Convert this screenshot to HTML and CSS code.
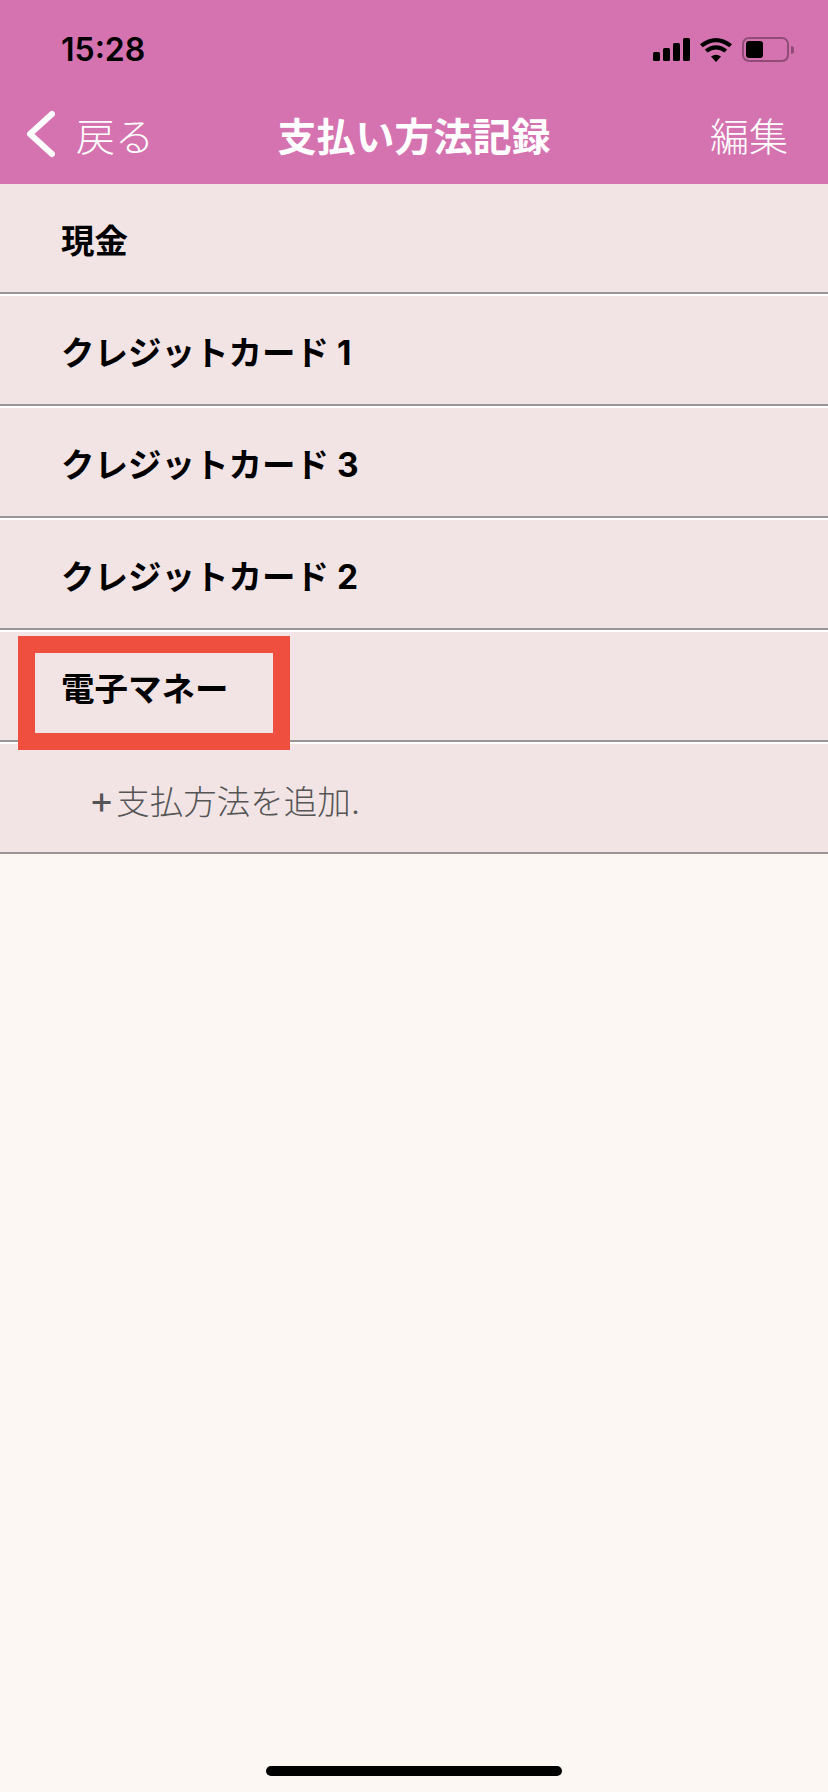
FILE: index.html
```html
<!DOCTYPE html>
<html lang="ja">
<head>
    <meta charset="UTF-8">
    <meta name="viewport" content="width=device-width, initial-scale=1.0">
    <title>支払い方法記録</title>
    <link rel="stylesheet" href="styles.css">
</head>
<body>
    <header class="top-bar">
        <div class="status-bar">
            <span class="clock">15:28</span>
            <div class="status-icons">
                <svg class="signal" width="37" height="23" viewBox="0 0 37 23">
                    <rect x="0" y="14" width="7" height="9" rx="1.5"/>
                    <rect x="10" y="10" width="7" height="13" rx="1.5"/>
                    <rect x="20" y="5" width="7" height="18" rx="1.5"/>
                    <rect x="30" y="0" width="7" height="23" rx="1.5"/>
                </svg>
                <svg class="wifi" width="32" height="24" viewBox="0 0 32 24">
                    <path d="M16 24 L11 18.5 Q16 15 21 18.5 Z"/>
                    <path d="M7.5 14.5 L4.8 11.5 Q16 3 27.2 11.5 L24.5 14.5 Q16 8.5 7.5 14.5 Z"/>
                    <path d="M2.7 9.3 L0 6.2 Q16 -6 32 6.2 L29.3 9.3 Q16 -1 2.7 9.3 Z"/>
                </svg>
                <div class="battery">
                    <div class="battery-body"><div class="battery-level"></div></div>
                    <div class="battery-tip"></div>
                </div>
            </div>
        </div>
        <nav class="nav-bar">
            <a class="nav-back">
                <svg width="30" height="48" viewBox="0 0 30 48">
                    <path d="M27 4 L5 24 L27 44" fill="none" stroke="#fff" stroke-width="6" stroke-linecap="round" stroke-linejoin="round"/>
                </svg>
                <span>戻る</span>
            </a>
            <h1 class="nav-title">支払い方法記録</h1>
            <a class="nav-edit">編集</a>
        </nav>
    </header>

    <ul class="method-list">
        <li class="method-row">現金</li>
        <li class="method-row">クレジットカード 1</li>
        <li class="method-row">クレジットカード 3</li>
        <li class="method-row">クレジットカード 2</li>
        <li class="method-row">
            電子マネー
            <div class="highlight-box"></div>
        </li>
        <li class="method-row add-row"><span class="plus">+</span>支払方法を追加.</li>
    </ul>

    <div class="home-bar"></div>
</body>
</html>
```

FILE: styles.css
```css
* {
    box-sizing: border-box;
}

body {
    font-family: Inter, "Noto Sans CJK JP", sans-serif;
    background-color: #fcf7f2;
    width: 828px;
    height: 1792px;
    margin: 0;
    position: relative;
    overflow: hidden;
}

.top-bar {
    background-color: #d573b1;
    height: 184px;
}

.status-bar {
    height: 92px;
    display: flex;
    justify-content: space-between;
    align-items: center;
    padding: 7px 34px 0 61px;
}

.clock {
    font-size: 32px;
    font-weight: 600;
    color: #000;
}

.status-icons {
    display: flex;
    align-items: center;
    gap: 10px;
}

.battery {
    display: flex;
    align-items: center;
    gap: 2px;
}

.battery-body {
    width: 47px;
    height: 25px;
    border: 2px solid #8f4c76;
    border-radius: 7px;
    padding: 2px;
}

.battery-level {
    width: 17px;
    height: 17px;
    background-color: #000;
    border-radius: 3px;
}

.battery-tip {
    width: 3px;
    height: 8px;
    background-color: #8f4c76;
    border-radius: 0 4px 4px 0;
}

.nav-bar {
    height: 92px;
    display: flex;
    align-items: center;
    justify-content: space-between;
    padding: 0 40px 8px 25px;
    position: relative;
    color: #fff;
}

.nav-back {
    display: flex;
    align-items: center;
    gap: 21px;
    font-size: 39px;
    font-weight: 300;
}

.nav-title {
    position: absolute;
    left: 0;
    right: 0;
    top: 0;
    height: 90px;
    line-height: 90px;
    margin: 0;
    text-align: center;
    font-size: 39px;
    font-weight: 700;
}

.nav-edit {
    font-size: 39px;
    font-weight: 300;
}

.method-list {
    list-style: none;
    margin: 0;
    padding: 0;
}

.method-row {
    height: 112px;
    padding: 0 0 2px 61px;
    display: flex;
    align-items: center;
    position: relative;
    background-color: #f2e4e5;
    border-bottom: 2px solid #fff;
    box-shadow: inset 0 -2px 0 #9a9596;
    font-size: 33.5px;
    font-weight: 700;
    color: #000;
}

.add-row {
    padding: 0 0 0 89px;
    border-bottom-color: #fcf7f2;
    font-weight: 300;
    color: #555;
}

.plus {
    font-size: 38px;
    font-weight: 400;
    margin-right: 2px;
}

.highlight-box {
    position: absolute;
    z-index: 1;
    left: 18px;
    top: 4px;
    width: 272px;
    height: 114px;
    border: 17px solid #ee4f3e;
}

.home-bar {
    position: absolute;
    left: 266px;
    bottom: 16px;
    width: 296px;
    height: 10px;
    border-radius: 5px;
    background-color: #000;
}
```
